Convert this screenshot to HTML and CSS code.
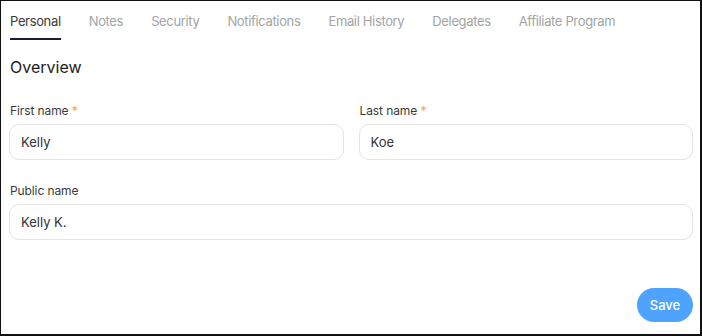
FILE: index.html
```html
<!DOCTYPE html>
<html>
<head>
<meta charset="utf-8">
<link rel="stylesheet" href="styles.css">
</head>
<body>
<div class="frame">
  <nav class="tabs">
    <span class="tab active">Personal</span>
    <span class="tab">Notes</span>
    <span class="tab">Security</span>
    <span class="tab">Notifications</span>
    <span class="tab">Email History</span>
    <span class="tab">Delegates</span>
    <span class="tab">Affiliate Program</span>
  </nav>
  <h2 class="title">Overview</h2>
  <div class="row">
    <div class="field">
      <label class="label">First name <span class="req">*</span></label>
      <div class="input">Kelly</div>
    </div>
    <div class="field">
      <label class="label">Last name <span class="req">*</span></label>
      <div class="input">Koe</div>
    </div>
  </div>
  <div class="field full">
    <label class="label">Public name</label>
    <div class="input">Kelly K.</div>
  </div>
  <div class="actions">
    <button class="save">Save</button>
  </div>
</div>
</body>
</html>
```

FILE: styles.css
```css
* { box-sizing: border-box; }
html, body { margin: 0; padding: 0; }
body {
  width: 702px;
  height: 336px;
  font-family: Inter, "Noto Sans", sans-serif;
  background: #fff;
}
.frame {
  width: 702px;
  height: 336px;
  border-style: solid;
  border-color: #111;
  border-width: 1px 2px 2px 1px;
  padding: 0 7px 0 8px;
  display: flex;
  flex-direction: column;
}
.tabs {
  display: flex;
  gap: 28px;
  padding-top: 12px;
  padding-left: 1px;
}
.tab {
  font-size: 13px;
  letter-spacing: -0.35px;
  color: #a3a3a3;
  padding: 0 0 9px;
  border-bottom: 2px solid transparent;
  line-height: 16px;
}
.tab.active {
  color: #3a3a3a;
  border-bottom-color: #1b1b3a;
}
.title {
  margin: 17px 0 0 1px;
  font-size: 16px;
  font-weight: 400;
  color: #222;
  line-height: 20px;
}
.row {
  display: flex;
  gap: 15px;
  margin-top: 26px;
}
.field { flex: 1; display: flex; flex-direction: column; }
.field.full { margin-top: 23px; }
.label {
  font-size: 12px;
  letter-spacing: -0.1px;
  color: #3a3a3a;
  line-height: 16px;
  margin-left: 1px;
  margin-bottom: 5px;
}
.req { color: #f5a33a; }
.input {
  height: 36px;
  border: 1px solid #e3e3e3;
  border-radius: 10px;
  padding: 0 11px;
  display: flex;
  align-items: center;
  font-size: 13px;
  color: #333;
}
.actions {
  margin-top: auto;
  display: flex;
  justify-content: flex-end;
  padding-bottom: 12px;
}
.save {
  background: #4da3ff;
  color: #fff;
  border: none;
  border-radius: 17px;
  height: 34px;
  width: 56px;
  font-family: inherit;
  font-size: 13px;
  font-weight: 500;
}
```
